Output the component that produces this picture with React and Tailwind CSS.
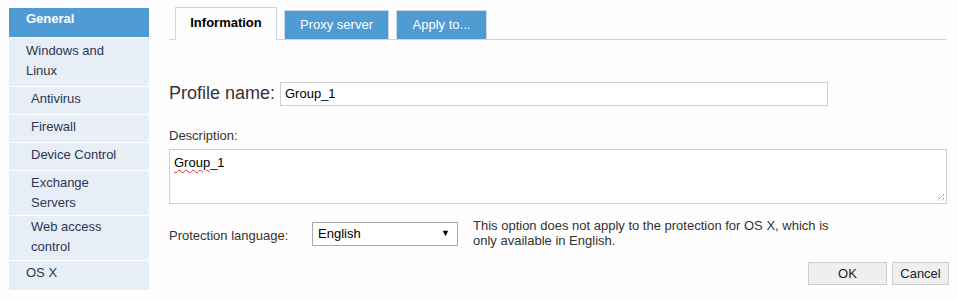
export default function App() {
  const font = { fontFamily: '"Liberation Sans", Arial, sans-serif' };
  return (
    <div className="w-[957px] h-[299px] bg-[#fefefe] flex text-[13px] text-[#333]" style={font}>
      {/* Sidebar */}
      <div className="ml-[9px] mt-[8px] w-[140px] flex flex-col text-[#283654] leading-[20px]">
        <div className="bg-[#4f9bd3] text-white font-bold pl-[17px] pt-[1px] h-[30px] border-b border-white">General</div>
        <div className="bg-[#e8eef6] pl-[17px] pt-[3px] h-[49px] border-b border-white">Windows and<br />Linux</div>
        <div className="bg-[#e8eef6] pl-[22px] pt-[2px] h-[28px] border-b border-white">Antivirus</div>
        <div className="bg-[#e8eef6] pl-[22px] pt-[2px] h-[28px] border-b border-white">Firewall</div>
        <div className="bg-[#e8eef6] pl-[22px] pt-[2px] h-[28px] border-b border-white">Device Control</div>
        <div className="bg-[#e8eef6] pl-[22px] pt-[2px] h-[45px] border-b border-white">Exchange<br />Servers</div>
        <div className="bg-[#e8eef6] pl-[22px] pt-[1px] h-[45px] border-b border-white">Web access<br />control</div>
        <div className="bg-[#e8eef6] pl-[17px] pt-[2px] h-[29px]">OS X</div>
      </div>

      {/* Main */}
      <div className="ml-[20px] w-[778px] flex flex-col">
        {/* Tabs */}
        <div className="mt-[7px] flex items-end gap-[7px] pl-[6px] border-b border-[#c9d7e8] h-[33px]">
          <div className="h-[33px] w-[102px] -mb-px bg-[#fefefe] border border-b-0 border-[#c9d7e8] flex items-center justify-center font-bold text-black pb-[2px]">
            Information
          </div>
          <div className="h-[29px] w-[105px] bg-[#4f9bd3] border border-b-0 border-[#c9d7e8] flex items-center justify-center text-white">
            Proxy server
          </div>
          <div className="h-[29px] w-[91px] bg-[#4f9bd3] border border-b-0 border-[#c9d7e8] flex items-center justify-center text-white">
            Apply to...
          </div>
        </div>

        {/* Profile name */}
        <div className="mt-[40px] flex items-center">
          <span className="text-[18px] text-[#333] w-[111px]">Profile name:</span>
          <div className="w-[548px] h-[24px] border border-[#d0d0d0] bg-white flex items-center pl-[4px] text-[13px] text-black">
            Group_1
          </div>
        </div>

        {/* Description */}
        <div className="mt-[21px] text-[13px] text-[#333] leading-[16px]">Description:</div>
        <div className="mt-[5px] relative w-[778px] h-[55px] border border-[#d0d0d0] bg-white pl-[4px] pt-[3px] text-[13px] text-black">
          <span className="underline decoration-wavy decoration-[#e03030] decoration-1 underline-offset-2">Group</span>_1
          <svg className="absolute right-[1px] bottom-[1px]" width="9" height="9" viewBox="0 0 9 9">
            <path d="M8 1 L1 8 M8 5 L5 8" stroke="#666" strokeWidth="1" strokeDasharray="1 1" fill="none" />
          </svg>
        </div>

        {/* Protection language */}
        <div className="mt-[18px] flex items-start">
          <span className="w-[143px] mt-[4px] text-[#333]">Protection language:</span>
          <div className="w-[146px] h-[24px] border border-[#a9a9a9] bg-white flex items-center justify-between pl-[5px] pr-[7px] text-black">
            <span>English</span>
            <span className="text-[9px]">▼</span>
          </div>
          <div className="ml-[15px] mt-[-4px] leading-[15px] text-[#333] w-[380px]">
            This option does not apply to the protection for OS X, which is only available in English.
          </div>
        </div>

        {/* Buttons */}
        <div className="mt-[14px] flex justify-end gap-[5px] mr-[-2px]">
          <div className="w-[79px] h-[23px] bg-[#efefef] border border-[#cdcdcd] flex items-center justify-center text-[#222]">OK</div>
          <div className="w-[57px] h-[23px] bg-[#efefef] border border-[#cdcdcd] flex items-center justify-center text-[#222]">Cancel</div>
        </div>
      </div>
    </div>
  );
}
